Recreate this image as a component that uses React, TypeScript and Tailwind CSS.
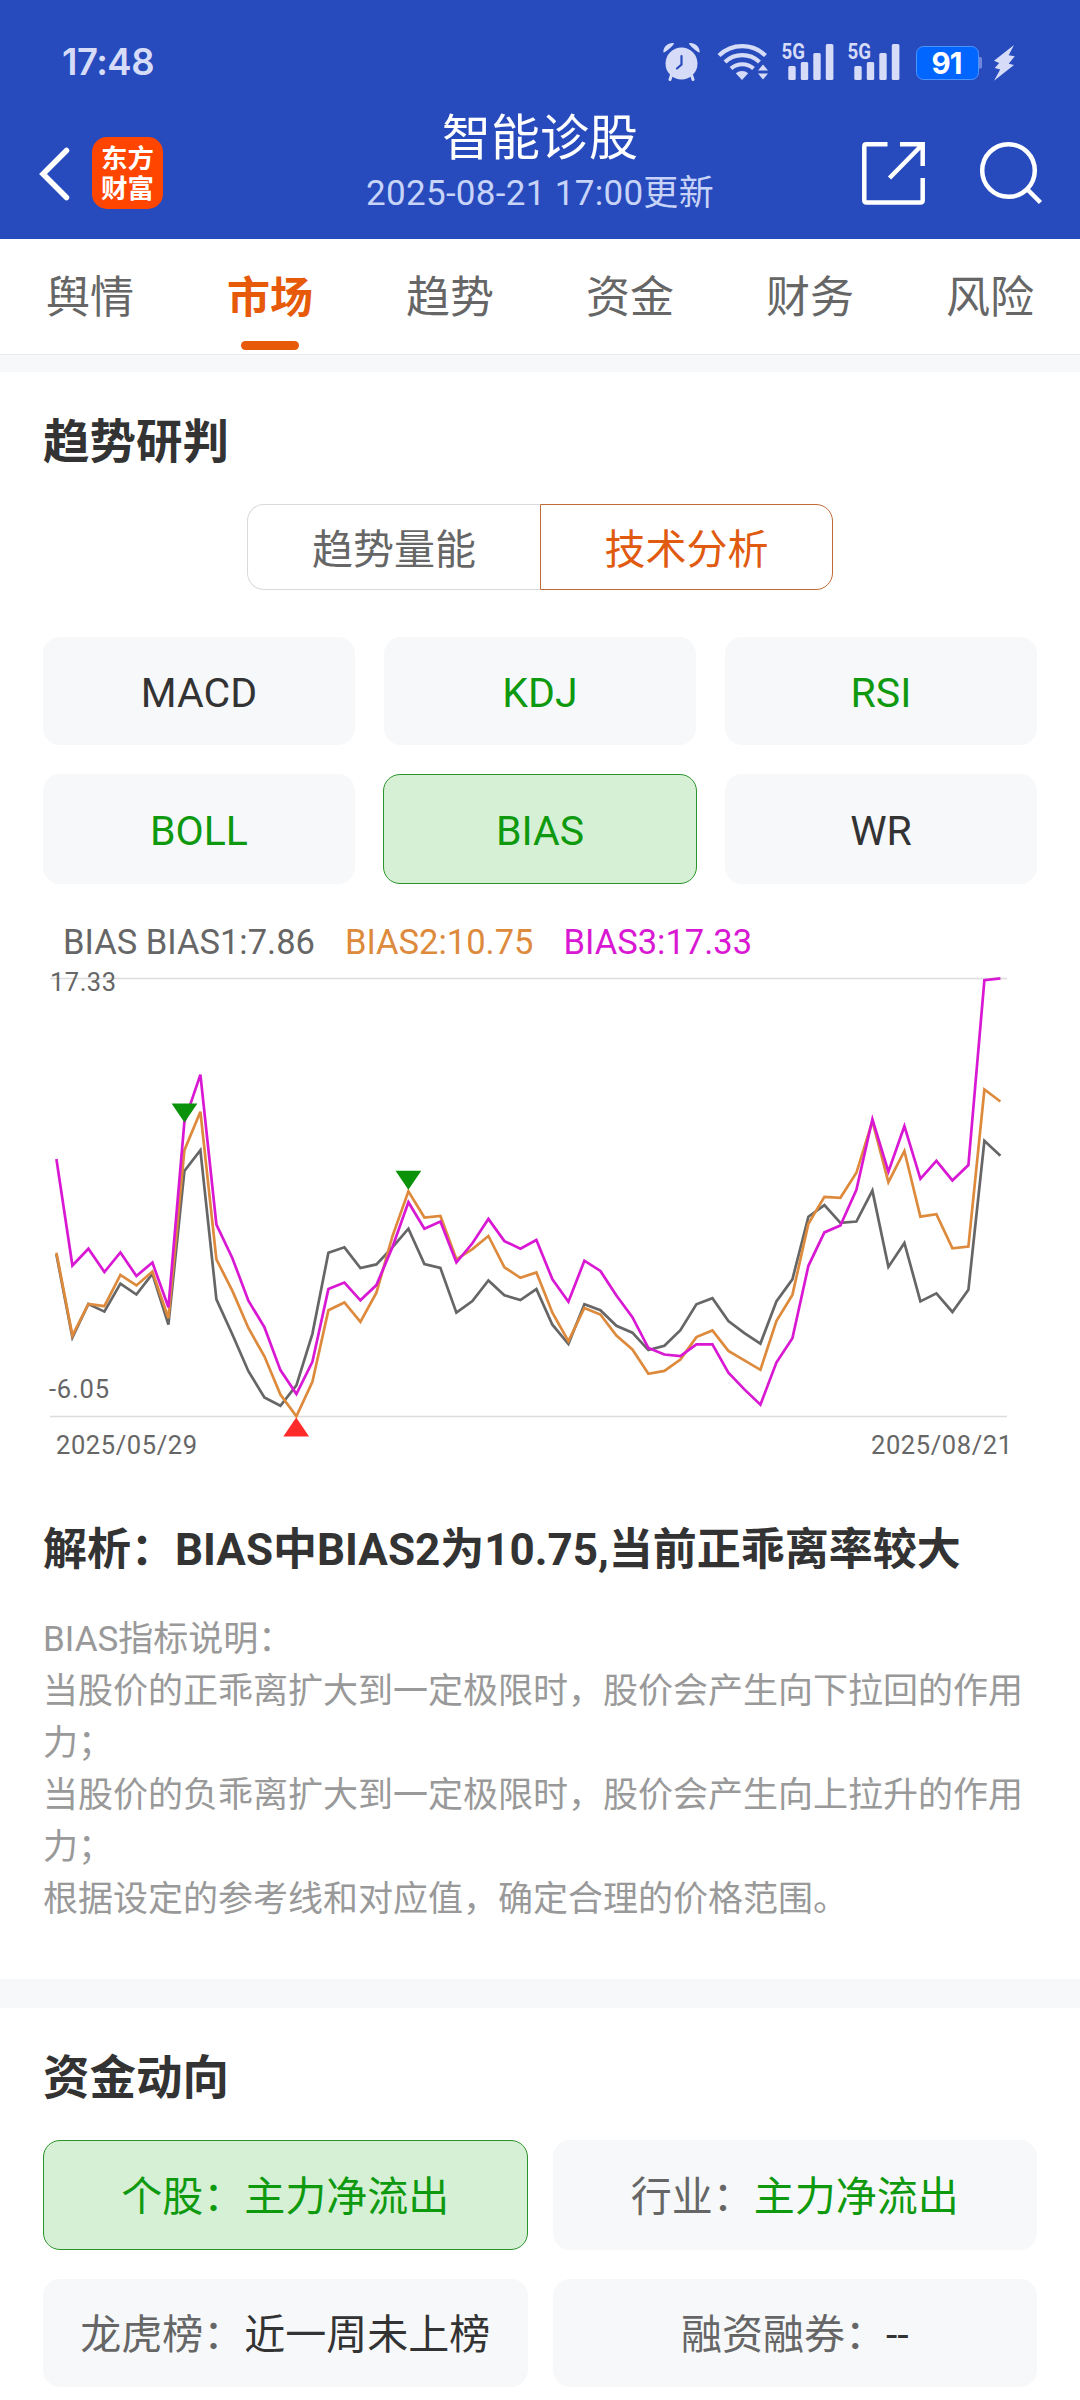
const TABS = ["舆情", "市场", "趋势", "资金", "财务", "风险"];

const INDICATORS = [
  { name: "MACD", signal: false },
  { name: "KDJ", signal: true },
  { name: "RSI", signal: true },
  { name: "BOLL", signal: true },
  { name: "BIAS", signal: true },
  { name: "WR", signal: false },
];

const FUNDS = [
  { label: "个股：", value: "主力净流出", color: "text-[#0f990f]" },
  { label: "行业：", value: "主力净流出", color: "text-[#0f990f]" },
  { label: "龙虎榜：", value: "近一周未上榜", color: "text-[#333]" },
  { label: "融资融券：", value: "--", color: "text-[#333]" },
];

const NOTES = [
  "BIAS指标说明：",
  "当股价的正乖离扩大到一定极限时，股价会产生向下拉回的作用力；",
  "当股价的负乖离扩大到一定极限时，股价会产生向上拉升的作用力；",
  "根据设定的参考线和对应值，确定合理的价格范围。",
];

// one entry per trading day: 215 is the top of the axis (17.33), 1420 the bottom (-6.05)
const BIAS1 = [
  975, 1203, 1111, 1132, 1055, 1085, 1028, 1168, 745, 688, 1098, 1195, 1296, 1368, 1391, 1335, 1193, 970, 955, 1012,
  1002, 955, 904, 1001, 1012, 1135, 1103, 1046, 1087, 1100, 1070, 1168, 1221, 1112, 1128, 1171, 1190, 1238, 1226, 1183,
  1112, 1095, 1158, 1191, 1220, 1104, 1043, 871, 839, 888, 884, 799, 1009, 943, 1104, 1082, 1133, 1072, 662, 703,
];
const BIAS2 = [
  970, 1198, 1111, 1117, 1031, 1060, 1022, 1150, 688, 582, 988, 1075, 1177, 1255, 1360, 1420, 1325, 1128, 1107, 1160,
  1080, 925, 801, 873, 869, 988, 960, 924, 1010, 1039, 1024, 1135, 1213, 1122, 1140, 1198, 1236, 1303, 1295, 1264,
  1202, 1184, 1240, 1266, 1292, 1158, 1086, 890, 816, 819, 750, 608, 776, 690, 871, 864, 958, 953, 521, 554,
];
const BIAS3 = [
  712, 1005, 959, 1023, 969, 1034, 997, 1120, 610, 480, 893, 985, 1102, 1175, 1293, 1359, 1270, 1070, 1052, 1101,
  1059, 955, 831, 904, 884, 997, 944, 877, 938, 959, 935, 1043, 1105, 992, 1020, 1088, 1147, 1232, 1250, 1254,
  1222, 1222, 1300, 1346, 1388, 1272, 1205, 1006, 914, 895, 797, 603, 747, 622, 767, 717, 771, 729, 220, 215,
];

const AXIS_TOP = 18.3;
const AXIS_BOTTOM = 456.3;

const toPoints = (values: number[]) =>
  values
    .map((v, i) => {
      const y = AXIS_TOP + ((v - 215) / 1205) * (AXIS_BOTTOM - AXIS_TOP);
      return `${(56.4 + i * 16).toFixed(1)},${y.toFixed(1)}`;
    })
    .join(" ");

function Signal() {
  return (
    <svg className="w-[54px] h-[46px]" viewBox="780 35 54 46" fill="#d6dcf8">
      <text x="781.5" y="59" fontSize="22" fontWeight="700" textLength="23.5" lengthAdjust="spacingAndGlyphs">
        5G
      </text>
      <rect x="788.3" y="66" width="7.4" height="14" rx="1.5" />
      <rect x="800.8" y="62" width="7.4" height="18" rx="1.5" />
      <rect x="813.3" y="53" width="7.4" height="27" rx="1.5" />
      <rect x="825.8" y="44" width="7.6" height="36" rx="1.5" />
    </svg>
  );
}

function StatusBar() {
  return (
    <div className="h-[100px] pt-[35px] pl-[62px] pr-[65px] flex justify-between">
      <div className="h-[46px] pt-[8px] leading-[38px] text-[36.5px] font-semibold font-[Inter,sans-serif] tracking-[-0.5px] text-[#d6dcf8]">
        17:48
      </div>
      <div className="flex h-[46px]">
        <svg className="w-[37px] h-[46px]" viewBox="663 35 37 46" fill="#d6dcf8">
          <circle cx="681.5" cy="63.5" r="16" />
          <path d="M663.5 52.5c-1-5 5-10.500 10.500-9.300.4 1.500-8.800 9.800-10.500 9.300zM699.5 52.5c1-5-5-10.500-10.500-9.300-.4 1.500 8.800 9.800 10.500 9.300z" />
          <path d="M671.500 75l-1.500 4.500M691.500 75l1.500 4.500" stroke="#d6dcf8" strokeWidth="3" strokeLinecap="round" />
          <path d="M681.500 56v8.500l-4.500 4" fill="none" stroke="#274bbd" strokeWidth="2.200" strokeLinecap="round" />
        </svg>
        <svg className="ml-[17px] w-[52px] h-[46px]" viewBox="717 35 52 46" fill="none" stroke="#d6dcf8" strokeWidth="4.200">
          <path d="M719 55.500a33.500 33.500 0 0 1 46.500 0" />
          <path d="M725 62a25 25 0 0 1 34.500 0" />
          <path d="M731 68.500a17 17 0 0 1 22.500 0" />
          <path d="M742 80l-6.200-6.800a9.500 9.500 0 0 1 12.400 0z" fill="#d6dcf8" stroke="none" />
          <path d="M763 64.500l5 6h-10zM763 79.500l5-6h-10z" fill="#d6dcf8" stroke="none" />
        </svg>
        <div className="ml-[11px] flex gap-[12px]">
          <Signal />
          <Signal />
        </div>
        <svg className="ml-[16px] w-[66px] h-[46px]" viewBox="916 35 66 46">
          <rect x="916.500" y="46.500" width="62" height="33" rx="7" fill="#0066ff" stroke="#4c94ff" />
          <path d="M979 57h1.500q1.500 0 1.500 1.500v8.500q0 1.500-1.500 1.500h-1.500z" fill="#6f86dc" />
          <text x="946.500" y="74" className="font-[Inter,sans-serif]" fontSize="29.500" fontWeight="700" textAnchor="middle" letterSpacing="-1" fill="#fff">
            91
          </text>
        </svg>
        <svg className="ml-[11px] w-[22px] h-[46px]" viewBox="993 35 22 46" fill="#d6dcf8">
          <path d="M1014 45l-5.300 10.300 6 .9-6 7.600 5.300 1.200L994 80.700l6.200-11.200-5.500-1.500 4.500-5-5.200-2.300z" />
        </svg>
      </div>
    </div>
  );
}

function NavBar() {
  return (
    <div className="h-[139px] pl-[39px] pr-[37px] flex justify-between">
      <div className="w-[260px] pt-[37px] flex">
        <svg className="w-[31px] h-[72px]" viewBox="39 137 31 72" fill="none" stroke="#fff" strokeWidth="5.500">
          <path d="M66.500 150.500L43 174l23.500 23.500" strokeLinecap="round" strokeLinejoin="miter" />
        </svg>
        <div className="ml-[22px] w-[71px] h-[72px] pt-[7px] rounded-[15px] bg-[#ff4500] text-white text-[26.500px] leading-[30px] font-bold text-center">
          <div>东方</div>
          <div>财富</div>
        </div>
      </div>
      <div className="pr-[2px] text-center whitespace-nowrap">
        <div className="pt-[9px] h-[69px] leading-[60px] text-[49px] text-white">智能诊股</div>
        <div className="leading-[50px] text-[35px] tracking-[0.300px] text-[#c8d3f8]">2025-08-21 17:00更新</div>
      </div>
      <div className="w-[260px] pt-[40px] flex justify-end">
        <svg className="w-[64px] h-[66px]" viewBox="862 140 64 66" fill="none" stroke="#fff" strokeWidth="4.500">
          <path d="M887.500 144.300h-21q-2.200 0-2.200 2.200v53.800q0 2.200 2.200 2.200h54q2.200 0 2.200-2.200V178" />
          <path d="M900 144.300h22.700V166M922 145l-32.500 33" />
        </svg>
        <svg className="ml-[53px] w-[64px] h-[66px]" viewBox="979 140 64 66" fill="none" stroke="#fff" strokeWidth="4.500">
          <ellipse cx="1008.500" cy="170.500" rx="26.300" ry="26.300" />
          <path d="M1027.500 189.500l13 13" />
        </svg>
      </div>
    </div>
  );
}

function BiasChart() {
  return (
    <svg className="block w-[1080px] h-[510px]" viewBox="0 0 1080 510" fill="none">
      <path d="M50 18.500H1007M50 456.500H1007" stroke="#dcdcdc" strokeWidth="1.300" />
      <g strokeWidth="2.700" strokeLinejoin="miter">
        <polyline points={toPoints(BIAS1)} stroke="#666666" />
        <polyline points={toPoints(BIAS2)} stroke="#dd8a3c" />
        <polyline points={toPoints(BIAS3)} stroke="#d918d3" />
      </g>
      <path d="M171.600 143.600h25.800l-12.900 19zM395.500 210.800h25.800l-12.900 19z" fill="#0a920a" />
      <path d="M283.300 476.500h25.800l-12.900-19z" fill="#ff2a2a" />
      <g fill="#666" fontSize="25.500">
        <text x="50" y="31" textLength="66">17.33</text>
        <text x="49" y="437.500" textLength="60">-6.05</text>
        <text x="56" y="493.500" textLength="141">2025/05/29</text>
        <text x="871" y="493.500" textLength="141">2025/08/21</text>
      </g>
    </svg>
  );
}

export default function App() {
  return (
    <div className="w-[1080px] h-[2400px] overflow-hidden bg-white text-[#333] font-[Roboto,'Noto_Sans_CJK_SC',sans-serif]">
      <header className="bg-[#274bbd]">
        <StatusBar />
        <NavBar />
      </header>

      <nav className="h-[116px] grid grid-cols-6 border-b border-[#ebebeb]">
        {TABS.map((tab) =>
          tab === "市场" ? (
            <div key={tab} className="flex flex-col items-center text-[#e65a0a] font-bold">
              <span className="pt-[29px] h-[102px] leading-[60px] text-[43px]">{tab}</span>
              <span className="w-[58px] h-[9px] rounded-full bg-[#e65a0a]" />
            </div>
          ) : (
            <div key={tab} className="pt-[29px] leading-[60px] text-[44px] text-center text-[#666]">
              {tab}
            </div>
          )
        )}
      </nav>
      <div className="h-[17px] bg-[#f7f8fa]" />

      <section className="h-[1607px]">
        <h2 className="px-[43px] pt-[40px] leading-[60px] text-[46.500px] font-bold">趋势研判</h2>

        <div className="mt-[32px] mx-auto w-[586px] h-[86px] grid grid-cols-2 text-[41px] leading-[78px] text-center">
          <div className="pt-[6px] border border-r-0 border-[#dadada] rounded-l-[17px] text-[#666]">趋势量能</div>
          <div className="pt-[6px] border border-[#bf6a35] rounded-r-[17px] text-[#e05a10]">技术分析</div>
        </div>

        <div className="mt-[47px] px-[43px] grid grid-cols-3 grid-rows-[108px_110px] gap-[29px] text-[41px] text-center">
          {INDICATORS.map((item) => (
            <div
              key={item.name}
              className={`pt-[5px] rounded-[17px] flex items-center justify-center ${
                item.signal ? "text-[#0f990f]" : "text-[#333]"
              } ${item.name === "BIAS" ? "bg-[#d5f0d5] border border-[#2b932b] -mx-px" : "bg-[#f7f8fa]"}`}
            >
              {item.name}
            </div>
          ))}
        </div>

        <div className="mt-[41px] h-[35px] pl-[63px] flex gap-[30px] leading-[35px] text-[34.500px] whitespace-nowrap">
          <span className="text-[#666]">BIAS BIAS1:7.86</span>
          <span className="text-[#dd8a3c]">BIAS2:10.75</span>
          <span className="text-[#d918d3]">BIAS3:17.33</span>
        </div>
        <BiasChart />

        <h3 className="mt-[50px] px-[43px] leading-[60px] text-[44px] font-bold whitespace-nowrap">
          解析：BIAS中BIAS2为10.75,当前正乖离率较大
        </h3>
        <div className="mt-[34px] pl-[43px] pr-[50px] text-[35px] leading-[52px] text-[#999]">
          {NOTES.map((line) => (
            <p key={line}>{line}</p>
          ))}
        </div>
      </section>

      <div className="h-[29px] bg-[#f7f8fa]" />

      <section>
        <h2 className="px-[43px] pt-[40px] leading-[60px] text-[46.500px] font-bold">资金动向</h2>
        <div className="mt-[32px] px-[43px] grid grid-cols-2 grid-rows-[110px_108px] gap-x-[25px] gap-y-[29px] text-[41px]">
          {FUNDS.map((item, i) => (
            <div
              key={item.label}
              className={`pt-[5px] rounded-[17px] flex items-center justify-center whitespace-nowrap ${
                i === 0 ? "bg-[#d5f0d5] border border-[#2b932b] text-[#0f990f]" : "bg-[#f7f8fa] text-[#666]"
              }`}
            >
              {item.label}
              <span className={item.color}>{item.value}</span>
            </div>
          ))}
        </div>
      </section>
    </div>
  );
}
